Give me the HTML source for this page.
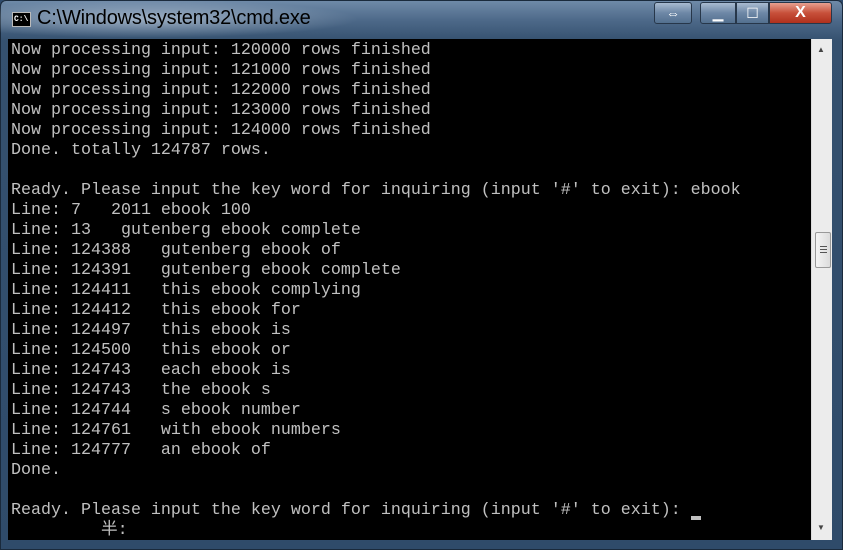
<!DOCTYPE html>
<html><head><meta charset="utf-8"><style>
*{margin:0;padding:0;box-sizing:border-box}
body{width:843px;height:550px;overflow:hidden;background:#2e4a6b;position:relative;font-family:"Liberation Sans",sans-serif}
.frame{position:absolute;inset:0;background:linear-gradient(180deg,#6f8aa8 0,#4c6888 20px,#35516f 40px,#2f4b6a 100%);border:1px solid #1a2a3c;border-radius:6px 6px 0 0}
.glow{position:absolute;left:0;top:0;width:360px;height:38px;background:radial-gradient(ellipse at 40% 50%,rgba(220,230,240,.55),rgba(220,230,240,0) 70%)}
.title{position:absolute;left:37px;top:7px;font-size:20px;color:#000;letter-spacing:-0.2px}
.icon{position:absolute;left:12px;top:12px;width:19px;height:15px;background:#000;border:1px solid #bbb;color:#fff;font:bold 8px "Liberation Mono",monospace;line-height:13px;padding-left:1px}
.btn{position:absolute;top:2px;height:22px;border:1px solid #27374a;border-radius:3px;background:linear-gradient(#a9bbd0,#6d87a6 50%,#53708f);color:#fff;text-align:center;font-size:14px;line-height:20px}
.con{position:absolute;left:8px;top:39px;width:803px;height:501px;background:#000}
pre{position:absolute;left:11px;top:41px;font-family:"Liberation Mono","WenQuanYi Zen Hei",monospace;font-size:16.67px;line-height:20px;color:#c0c0c0}
.sb{position:absolute;left:811px;top:39px;width:21px;height:501px;background:#ececec;border-left:1px solid #ddd}
.thumb{position:absolute;left:3px;top:193px;width:16px;height:36px;border:1px solid #999;border-radius:2px;background:linear-gradient(90deg,#f4f4f4,#dcdcdc)}
.grip{position:absolute;left:4px;width:7px;height:1px;background:#555}
.cur{position:absolute;left:691px;top:516px;width:10px;height:4px;background:#c0c0c0}
</style></head><body>
<div class="frame"></div>
<div class="glow"></div>
<div class="icon">C:\</div>
<div class="title">C:\Windows\system32\cmd.exe</div>
<div class="btn" style="left:654px;width:38px">⇔</div>
<div class="btn" style="left:700px;width:36px;border-radius:3px 0 0 3px">▁</div>
<div class="btn" style="left:736px;width:33px;border-radius:0">☐</div>
<div class="btn" style="left:769px;width:63px;border-radius:0 3px 3px 0;background:linear-gradient(#e8a090,#c7503a 50%,#b0301c);font-weight:bold;font-size:16px">X</div>
<div class="con"></div>
<pre>Now processing input: 120000 rows finished
Now processing input: 121000 rows finished
Now processing input: 122000 rows finished
Now processing input: 123000 rows finished
Now processing input: 124000 rows finished
Done. totally 124787 rows.

Ready. Please input the key word for inquiring (input '#' to exit): ebook
Line: 7   2011 ebook 100
Line: 13   gutenberg ebook complete
Line: 124388   gutenberg ebook of
Line: 124391   gutenberg ebook complete
Line: 124411   this ebook complying
Line: 124412   this ebook for
Line: 124497   this ebook is
Line: 124500   this ebook or
Line: 124743   each ebook is
Line: 124743   the ebook s
Line: 124744   s ebook number
Line: 124761   with ebook numbers
Line: 124777   an ebook of
Done.

Ready. Please input the key word for inquiring (input '#' to exit):
         半:</pre>
<div class="cur"></div>
<div class="sb"><div style="position:absolute;left:5px;top:6px;font-size:8px;color:#444">▲</div>
<div class="thumb"><div class="grip" style="top:13px"></div><div class="grip" style="top:16px"></div><div class="grip" style="top:19px"></div></div>
<div style="position:absolute;left:5px;top:484px;font-size:8px;color:#444">▼</div></div>
</body></html>
